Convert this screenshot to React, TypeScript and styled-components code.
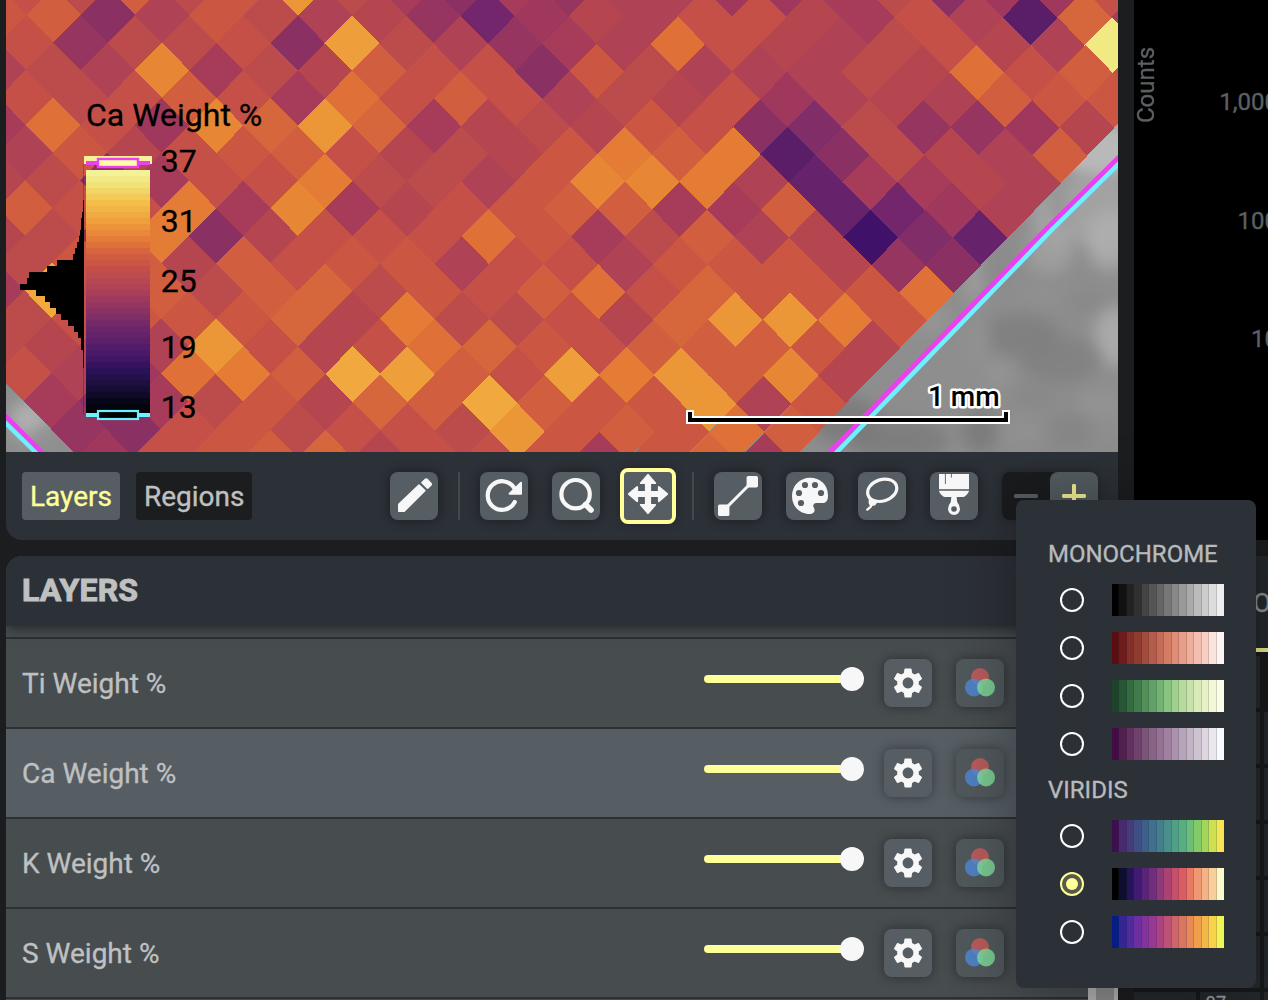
import React from "react";
import styled, { createGlobalStyle } from "styled-components";
import { MdSettings } from "react-icons/md";

const GlobalStyle = createGlobalStyle`
  * { box-sizing: border-box; }
  body { margin: 0; background: #1c1d1f; overflow: hidden; }
`;

const Page = styled.div`
  position: relative;
  display: flex;
  gap: 16px;
  width: 1268px;
  height: 1000px;
  padding-left: 6px;
  overflow: hidden;
  background: #1c1d1f;
  color: #bfc0c1;
  font-family: Roboto, "Liberation Sans", sans-serif;
  -webkit-text-stroke: 0.35px currentColor;
`;

const LeftColumn = styled.div`
  flex: 0 0 1112px;
  display: flex;
  flex-direction: column;
  gap: 16px;
`;

const ViewPanel = styled.section`
  display: flex;
  flex-direction: column;
  flex: none;
  height: 540px;
  border-radius: 0 0 16px 16px;
  background: #2c3037;
  overflow: hidden;
`;

const MapCanvas = styled.svg`
  display: block;
  flex: none;
  width: 1112px;
  height: 452px;
  font-family: Roboto, "Liberation Sans", sans-serif;
  -webkit-text-stroke: 0;
`;

const Toolbar = styled.div`
  display: flex;
  justify-content: space-between;
  flex: none;
  padding: 20px 20px 20px 16px;
  height: 88px;
`;

const TabGroup = styled.div`
  display: flex;
  gap: 16px;
`;

const Tab = styled.button<{ $active?: boolean }>`
  height: 48px;
  padding: 1px 8px 0;
  border: 0;
  border-radius: 4px;
  background: ${(p) => (p.$active ? "#565e64" : "#1c1d1f")};
  color: ${(p) => (p.$active ? "#ffff99" : "#bfc0c1")};
  font: 400 28px/47px Roboto, "Liberation Sans", sans-serif;
  -webkit-text-stroke: 0.35px currentColor;
`;

const Tools = styled.div`
  display: flex;
  gap: 24px;
`;

const ToolSet = styled.div`
  display: flex;
  gap: 24px;
`;

const Divider = styled.div`
  width: 2px;
  height: 48px;
  margin: 0 -4px;
  background: #44484c;
`;

const IconButton = styled.button<{ $selected?: boolean }>`
  display: flex;
  align-items: center;
  justify-content: center;
  width: 48px;
  height: 48px;
  flex: none;
  padding: 0;
  border: 0;
  border-radius: ${(p) => (p.$selected ? 4 : 8)}px;
  outline: ${(p) => (p.$selected ? "4px solid #ffff99" : "none")};
  background: #565e64;
  color: #f7f7f7;
  box-shadow: 0 0 12px rgba(0, 0, 0, ${(p) => (p.$selected ? 0.65 : 0.4)});
`;

const RowButton = styled(IconButton)<{ $dim?: boolean }>`
  background: ${(p) => (p.$dim ? "#50585c" : "#565e64")};
`;

const Toggle = styled.div`
  display: flex;
  width: 96px;
  height: 48px;
  border-radius: 8px;
  background: #1a1b1d;
  box-shadow: 0 0 10px rgba(0, 0, 0, 0.3);
`;

const ToggleHalf = styled.div<{ $on?: boolean }>`
  display: flex;
  align-items: center;
  justify-content: center;
  width: 48px;
  border-radius: 8px;
  background: ${(p) => (p.$on ? "#535b60" : "transparent")};
  color: ${(p) => (p.$on ? "#f0f094" : "#565e64")};
`;

const LayersPanel = styled.section`
  display: flex;
  flex-direction: column;
  flex: none;
  height: 460px;
  border-radius: 16px 16px 0 0;
  background: #474c4f;
  overflow: hidden;
`;

const LayersHeader = styled.h2`
  flex: none;
  height: 70px;
  margin: 0;
  padding-left: 16px;
  background: #2c3037;
  box-shadow: 0 2px 12px rgba(0, 0, 0, 0.5);
  font-size: 32px;
  font-weight: 700;
  line-height: 69px;
  letter-spacing: 0.2px;
  -webkit-text-stroke: 1px currentColor;
  z-index: 1;
`;

const LayerGap = styled.div`
  flex: none;
  height: 13px;
  border-bottom: 2px solid #2c3134;
`;

const LayerRow = styled.div<{ $selected?: boolean }>`
  display: flex;
  align-items: center;
  flex: none;
  height: 90px;
  padding: 0 114px 0 16px;
  border-bottom: 2px solid #2c3134;
  background: ${(p) => (p.$selected ? "#565e64" : "#474c4f")};
  font-size: 28px;
`;

const LayerName = styled.span`
  flex: 1;
`;

const SliderTrack = styled.div`
  display: flex;
  align-items: center;
  justify-content: flex-end;
  width: 160px;
  height: 24px;
  margin: 0 20px 8px 0;
`;

const SliderFill = styled.div`
  flex: 1;
  height: 8px;
  margin-right: -4px;
  border-radius: 4px;
  background: #ffff99;
`;

const SliderThumb = styled.div`
  width: 24px;
  height: 24px;
  border-radius: 50%;
  background: #f7f7f7;
`;

const RowActions = styled.div`
  display: flex;
  gap: 24px;
`;

const RightColumn = styled.div`
  flex: 1;
  min-width: 0;
  display: flex;
  flex-direction: column;
  gap: 16px;
  overflow: hidden;
`;

const ChartPanel = styled.section`
  display: flex;
  height: 540px;
  flex: none;
  background: #000;
  color: #5b6063;
`;

const AxisTitle = styled.div`
  writing-mode: vertical-rl;
  transform: rotate(180deg);
  flex: none;
  width: 22px;
  height: 76px;
  margin-top: 47px;
  font-size: 24px;
  line-height: 24px;
`;

const Ticks = styled.div`
  display: flex;
  flex-direction: column;
  flex: none;
  width: 122px;
  padding-top: 43px;
`;

const Tick = styled.div`
  flex: none;
  height: 118.5px;
  font-size: 24px;
  line-height: 118px;
  text-align: right;
`;

const TablePanel = styled.section`
  display: flex;
  flex-direction: column;
  height: 444px;
  background: #24292d;
`;

const TableTab = styled.div`
  height: 96px;
  padding-left: 119px;
  border-bottom: 4px solid #e7e78c;
  font-size: 26px;
  line-height: 94px;
  color: #8c8f91;
`;

const TableGrid = styled.div`
  flex: 1;
  display: grid;
  grid-template-columns: 62px 60px 10px;
  grid-template-rows: 52px;
  grid-auto-rows: 52px;
  gap: 4px;
  padding-top: 4px;
  background: #17191a;
`;

const Cell = styled.div<{ $blank?: boolean }>`
  padding: 0 34px 0 0;
  background: ${(p) => (p.$blank ? "#17191a" : "#24292d")};
  color: #9b9d9e;
  font-size: 18px;
  line-height: 22px;
  text-align: right;
`;

const ScrollBar = styled.div`
  position: absolute;
  left: 1088px;
  top: 626px;
  width: 30px;
  height: 374px;
  border: solid #b3b3b3;
  border-width: 0 4px 0 8px;
  background: #8c8c8c;
`;

const Popup = styled.aside`
  position: absolute;
  z-index: 5;
  left: 1016px;
  top: 500px;
  width: 240px;
  height: 488px;
  padding: 32px;
  border-radius: 8px;
  background: #2c3037;
  box-shadow: 0 6px 64px rgba(0, 0, 0, 0.34);
`;

const PaletteTitle = styled.h3`
  height: 44px;
  margin: 0;
  color: #b9babc;
  font-size: 24px;
  font-weight: 400;
  line-height: 44px;
`;

const PaletteRow = styled.div`
  display: flex;
  align-items: center;
  justify-content: space-between;
  height: 48px;
  padding-left: 12px;
`;

const Radio = styled.div<{ $checked?: boolean }>`
  display: flex;
  align-items: center;
  justify-content: center;
  width: 24px;
  height: 24px;
  border: 2px solid ${(p) => (p.$checked ? "#ffff99" : "#fff")};
  border-radius: 50%;
  background: ${(p) => (p.$checked ? "#575a48" : "transparent")};
`;

const RadioDot = styled.div`
  width: 12px;
  height: 12px;
  border-radius: 50%;
  background: #ffff99;
`;

const Swatches = styled.div`
  display: flex;
  width: 112px;
  height: 32px;
`;

const Swatch = styled.div<{ $color: string }>`
  flex: 1;
  background: ${(p) => p.$color};
  box-shadow: inset -1px 0 0 rgba(44, 48, 55, 0.18);
  &:last-child { box-shadow: none; }
`;

/* Each character is a weight level; a dot is a place with no measurement. */
const ROWS = [
  "CBEBDJB858699778B577C",
  "DE59DB9A637A9CCA8C91F8",
  "C6BBC5KB9689GCA9BCA9M",
  "9B9I8BAECC5DB999BAGCEC",
  "CBCEC8GCEC9BAC79A9EDD",
  "8GC7IFJF8ABADC54B667A.",
  "9DACDECABADHEH15BA9E.",
  "AB58CCHBB9DIIH9288A9..",
  "ECCH8I8ACDEE88E2379..",
  "AB5H5ACCCGD8BE9A042...",
  "BDEAECDD9CC9DDDA65...",
  "8LCEBEFBDCEGCFDDDG....",
  "BCDDDFAHBBCAFJJHD....",
  "BAA9JCACGFDCEEEDA.....",
  "C97GHELKECKHJEIA.....",
  ".858BDAFELEDDJ9D......",
  ".65CDBCCBJDEDGE......",
  "..7CDEFACCD8DF8.......",
];

const LEVELS = "0123456789ABCDEFGHIJKLM";
const LEVEL_COLORS = [
  "#3f1168", "#5a1e69", "#66236b", "#73266b", "#812d68", "#8b3063", "#953560", "#9f385c",
  "#a63c59", "#af4254", "#b54650", "#bc4b4c", "#c45048", "#cb5743", "#d05e3f", "#d6663c",
  "#df7037", "#e47c36", "#e78735", "#ec9737", "#ee9f3b", "#f0a83f", "#f1ea82",
];

const RAMP: [number, number[]][] = [
  [170, [244, 243, 154]], [182, [239, 228, 120]], [200, [243, 192, 75]], [218, [238, 162, 61]],
  [236, [230, 126, 54]], [250, [214, 99, 62]], [266, [197, 80, 72]], [284, [178, 68, 84]],
  [300, [154, 56, 96]], [320, [118, 42, 104]], [340, [90, 31, 105]], [356, [66, 22, 102]],
  [372, [38, 17, 82]], [384, [26, 14, 58]], [396, [10, 8, 32]], [412, [0, 0, 0]],
];

function rampColor(y: number) {
  const n = Math.max(1, RAMP.findIndex(([stop]) => stop >= y));
  const [y0, a] = RAMP[n - 1];
  const [y1, b] = RAMP[n];
  const t = (y - y0) / (y1 - y0);
  return `rgb(${a.map((v, k) => Math.round(v + (b[k] - v) * t)).join(",")})`;
}

const HISTOGRAM = [
  1, 1, 2, 3, 3, 4, 5, 7, 9, 11, 27, 37, 55, 57, 64, 48, 39, 34, 28, 23, 16, 10, 6, 3, 3, 1, 1, 1,
];

/* cx, cy, rx, ry, grey level, opacity */
const CLOUDS = [
  [1100, 150, 40, 30, 190, 0.9], [1090, 215, 60, 40, 168, 0.8], [1058, 200, 8, 22, 142, 0.7],
  [1110, 240, 24, 30, 178, 0.7], [1075, 255, 12, 14, 138, 0.8], [1050, 252, 24, 22, 168, 0.6],
  [1114, 336, 20, 30, 176, 0.8], [1020, 335, 40, 22, 124, 0.7], [978, 340, 12, 24, 148, 0.7],
  [930, 320, 20, 16, 150, 0.8], [1000, 375, 16, 14, 150, 0.7], [1060, 360, 40, 24, 126, 0.7],
  [1100, 405, 24, 14, 150, 0.6], [980, 432, 18, 22, 116, 0.7], [1024, 432, 22, 14, 146, 0.7],
  [930, 390, 14, 16, 142, 0.6], [900, 440, 50, 22, 122, 0.8], [1070, 430, 24, 16, 130, 0.7],
  [974, 280, 10, 24, 162, 0.7], [1000, 270, 12, 20, 136, 0.6], [1050, 295, 30, 12, 146, 0.6],
  [845, 420, 36, 24, 118, 0.7], [30, 420, 20, 20, 180, 0.9], [46, 440, 18, 14, 145, 0.8],
  [1085, 300, 22, 12, 132, 0.5], [1035, 395, 24, 14, 132, 0.5],
];

function WeightMap() {
  return (
    <MapCanvas viewBox="6 0 1112 452">
      <defs>
        <filter id="soft" x="-100%" y="-100%" width="300%" height="300%">
          <feGaussianBlur stdDeviation="8" />
        </filter>
      </defs>
      <rect x="6" width="1112" height="452" fill="#8e8e8e" />
      {CLOUDS.map(([cx, cy, rx, ry, g, o], k) => (
        <ellipse key={k} cx={cx} cy={cy} rx={rx} ry={ry} fill={`rgb(${g},${g},${g})`} opacity={o} filter="url(#soft)" />
      ))}
      {ROWS.map((row, r) => {
        const first = r % 2 === 0 ? -12 : -13;
        const j = r - 2;
        return [...row].map((ch, c) => {
          if (ch === ".") return null;
          const x = 352 + 0.05 * j + (27.14 + 0.02 * j) * (first + 2 * c);
          const y = 42.8 + 27.55 * j + x * (0.0026 + 0.0013 * Math.max(0, j - 12));
          const color = LEVEL_COLORS[LEVELS.indexOf(ch)];
          return (
            <path
              key={`${r}-${c}`}
              d={`M${x - 27.8} ${y}L${x} ${y - 28}L${x + 27.8} ${y}L${x} ${y + 28}Z`}
              fill={color}
              shapeRendering="crispEdges"
            />
          );
        });
      })}
      <g fill="none" strokeWidth="4.6">
        <path d="M1124 158.5L1056 225.5L835 454" stroke="#6df0ff" />
        <path d="M1124 152L1050 225L828 454" stroke="#ec40f0" />
        <path d="M0 417.5L41 457.5" stroke="#6df0ff" />
        <path d="M0 410.5L47 457.5" stroke="#ec40f0" />
      </g>

      <g fontSize="32" stroke="#000" strokeWidth=".3">
        <text x="86" y="126">Ca Weight %</text>
      </g>
      {HISTOGRAM.map((w, k) => (
        <rect key={k} x={84 - w} y={200 + 6 * k} width={w} height="6" shapeRendering="crispEdges" />
      ))}
      <path d="M83.5 164V200M83.5 368V415" stroke="#000" strokeOpacity=".2" />
      <rect x="84" y="156" width="68" height="8" fill="#f7f29a" />
      {Array.from({ length: 41 }, (_, k) => (
        <rect key={k} x="86" y={170 + 6 * k} width="64" height={k === 40 ? 5 : 6} fill={rampColor(Math.min(412, 171 + 6 * k))} shapeRendering="crispEdges" />
      ))}
      <rect x="86" y="161" width="64" height="4" fill="#ec40f0" />
      <rect x="98" y="159" width="40" height="8" fill="#fdfda8" stroke="#ec40f0" strokeWidth="2.4" />
      <rect x="86" y="413" width="64" height="4" fill="#6df0ff" />
      <rect x="98" y="411" width="40" height="8" fill="#000" stroke="#6df0ff" strokeWidth="2.2" />
      <g fontSize="32" stroke="#000" strokeWidth=".3">
        <text x="160.7" y="172">37</text>
        <text x="160.7" y="232">31</text>
        <text x="160.7" y="292">25</text>
        <text x="160.7" y="358">19</text>
        <text x="160.7" y="418">13</text>
      </g>

      <g fill="none">
        <path d="M690 410V420H1006V410" stroke="#fff" strokeWidth="8" />
        <path d="M690 412V420H1006V412" stroke="#000" strokeWidth="4" />
      </g>
      <text x="928" y="406" fontSize="28" fontWeight="500" stroke="#fff" strokeWidth="5" strokeLinejoin="round" paintOrder="stroke">1 mm</text>
    </MapCanvas>
  );
}

const Glyph = styled.svg.attrs({ viewBox: "0 0 48 48" })`
  display: block;
  width: 48px;
  height: 48px;
  fill: currentColor;
`;

const PencilIcon = () => (
  <Glyph stroke="currentColor" strokeWidth="1.6" strokeLinejoin="round">
    <path d="M8.8 39.2V32.4L29 13L34.8 18.6L14.2 39.2Z" />
    <path d="M32 10.6L35.7 7.2Q36.3 6.8 37 7.4L41 11.5Q41.5 12.3 41 13L37.6 16.2Z" />
  </Glyph>
);

const RotateIcon = () => (
  <Glyph>
    <path d="M34.8 30A14.3 14.3 0 1 1 34.5 16.5" fill="none" stroke="currentColor" strokeWidth="4.2" strokeLinecap="round" />
    <path d="M41 10.8V21.8H29.6Z" stroke="currentColor" strokeWidth="2" strokeLinejoin="round" />
  </Glyph>
);

const ZoomIcon = () => (
  <Glyph>
    <circle cx="23.6" cy="22.2" r="14.2" fill="none" stroke="currentColor" strokeWidth="4.2" />
    <path d="M33.5 32.5L39 38" stroke="currentColor" strokeWidth="5.6" strokeLinecap="round" />
  </Glyph>
);

const MoveIcon = () => (
  <Glyph>
    <path
      d="M24 2.8L31.2 11.2H26.2V19.8H34.8V15L43.2 22L34.8 29.2V24.2H26.2V32.8H31.2L24 41.2L16.8 32.8H21.8V24.2H13.2V29.2L4.8 22L13.2 15V19.8H21.8V11.2H16.8Z"
      stroke="currentColor"
      strokeWidth="1.8"
      strokeLinejoin="round"
    />
  </Glyph>
);

const LineIcon = () => (
  <Glyph>
    <path d="M10 38L38 10" stroke="currentColor" strokeWidth="3" />
    <rect x="32.6" y="4" width="11.4" height="11.4" rx="1.6" />
    <rect x="4" y="32.6" width="11.4" height="11.4" rx="1.6" />
  </Glyph>
);

const PaletteIcon = () => (
  <Glyph>
    <path d="M24 5.8C34 5.8 42 12.6 42 23.4C42 28.6 40 31 36.4 31L30.4 31C27.6 31 26.6 33.6 27.8 35.6C29.6 38.8 28.4 42 23.6 42C13.6 42 6 34.2 6 24C6 13.6 14 5.8 24 5.8Z" />
    <g fill="#565e64">
      <circle cx="19" cy="13" r="3.1" />
      <circle cx="29" cy="13" r="3.1" />
      <circle cx="35" cy="21" r="3.1" />
      <circle cx="13" cy="21" r="3.1" />
      <circle cx="15" cy="31" r="3.1" />
    </g>
  </Glyph>
);

const LassoIcon = () => (
  <Glyph>
    <ellipse cx="24.2" cy="18.3" rx="14.9" ry="10.7" transform="rotate(-18 24.2 18.3)" fill="none" stroke="currentColor" strokeWidth="3.2" />
    <path d="M10.8 25.5L14.5 27.5L20 29.5L17 33.5L12 34L10.6 31Z" />
    <path d="M14 31.5L12.6 34.8L9.3 37.6" fill="none" stroke="currentColor" strokeWidth="2.4" strokeLinecap="round" />
  </Glyph>
);

const BrushIcon = () => (
  <Glyph>
    <rect x="9" y="2" width="30" height="15.2" />
    <path d="M15.4 2V12M21.4 2V5.6" stroke="#565e64" strokeWidth=".9" />
    <path d="M9 18.8H39C38.4 21.8 35.4 24.4 33.4 25H14.6C12.6 24.4 9.6 21.8 9 18.8Z" />
    <path fillRule="evenodd" d="M21.4 24.5H26.6L27.2 30Q30 33.4 30 37A6 6 0 0 1 18 37Q18 33.4 20.8 30ZM24 34.2A2.8 2.8 0 1 0 24 39.8A2.8 2.8 0 1 0 24 34.2Z" />
  </Glyph>
);

const RgbIcon = () => (
  <Glyph>
    <circle cx="24" cy="18" r="9" fill="#d05b5a" opacity=".8" />
    <circle cx="18" cy="28.4" r="9" fill="#4d8be0" opacity=".76" />
    <circle cx="30" cy="28.4" r="9" fill="#80dd9a" opacity=".82" />
  </Glyph>
);

const MinusIcon = () => (
  <Glyph><rect x="12" y="22" width="24" height="4" rx="1.6" /></Glyph>
);

const PlusIcon = () => (
  <Glyph>
    <rect x="12" y="22" width="24" height="4" rx="1.4" />
    <rect x="22" y="12" width="4" height="24" rx="1.4" />
  </Glyph>
);

const LAYERS = ["Ti Weight %", "Ca Weight %", "K Weight %", "S Weight %"];

const colors = (list: string) => list.split(" ").map((c) => `#${c}`);

const PALETTES = [
  {
    title: "MONOCHROME",
    ramps: [
      colors("000000 111111 222222 303030 444444 555555 666666 777777 888888 999999 aaaaaa bbbbbb cccccc dddddd eeeeee"),
      colors("5c0d12 6f1d1c 833028 8f3c30 a44c3c b55b4a c46c57 d57c65 e08d77 e79d88 efad9b f4bfb0 f8d0c2 fae4db fbf5f3"),
      colors("1d432b 275637 336a40 427b4b 529057 62a165 74b274 88c380 a0d08d b5da9c c8e3a9 d8ebb8 e6f1c6 f2f7d8 fbfde8"),
      colors("440c44 52204f 613260 6e426d 7c5379 886385 957194 a081a0 ac92ac b8a4ba c3b4c5 cec4d1 dfd6e1 eae7ee f7fbff"),
    ],
  },
  {
    title: "VIRIDIS",
    ramps: [
      colors("3c0f50 472a6f 443c7b 3f4f84 3c6089 3f708c 447f8c 4a8f8b 4fa087 57af80 6cbd75 83ca69 a4d55b cfdf4f f8e453"),
      colors("000000 0f0e30 261458 411b71 5b247a 722e7c 8f397a aa4374 c64f6a db5d61 e97a62 f09872 f4b384 f6cf9b fafbcc"),
      colors("061d87 352592 4f2b9d 6b2fa1 82339c 993891 ac4381 bc5376 cd6569 da7560 e78a54 ef9f4c f4b74a f6d348 eef653"),
    ],
  },
];

export default function App() {
  return (
    <Page>
      <GlobalStyle />
      <LeftColumn>
        <ViewPanel>
          <WeightMap />
          <Toolbar>
            <TabGroup>
              <Tab $active>Layers</Tab>
              <Tab>Regions</Tab>
            </TabGroup>
            <Tools>
              <IconButton><PencilIcon /></IconButton>
              <Divider />
              <ToolSet>
                <IconButton><RotateIcon /></IconButton>
                <IconButton><ZoomIcon /></IconButton>
                <IconButton $selected><MoveIcon /></IconButton>
              </ToolSet>
              <Divider />
              <ToolSet>
                <IconButton><LineIcon /></IconButton>
                <IconButton><PaletteIcon /></IconButton>
                <IconButton><LassoIcon /></IconButton>
                <IconButton><BrushIcon /></IconButton>
              </ToolSet>
              <Toggle>
                <ToggleHalf><MinusIcon /></ToggleHalf>
                <ToggleHalf $on><PlusIcon /></ToggleHalf>
              </Toggle>
            </Tools>
          </Toolbar>
        </ViewPanel>
        <LayersPanel>
          <LayersHeader>LAYERS</LayersHeader>
          <LayerGap />
          {LAYERS.map((name) => (
            <LayerRow key={name} $selected={name === "Ca Weight %"}>
              <LayerName>{name}</LayerName>
              <SliderTrack>
                <SliderFill />
                <SliderThumb />
              </SliderTrack>
              <RowActions>
                <RowButton><MdSettings size={36} /></RowButton>
                <RowButton $dim><RgbIcon /></RowButton>
              </RowActions>
            </LayerRow>
          ))}
        </LayersPanel>
      </LeftColumn>
      <RightColumn>
        <ChartPanel>
          <AxisTitle>Counts</AxisTitle>
          <Ticks>
            <Tick>1,000</Tick>
            <Tick>100</Tick>
            <Tick>10</Tick>
          </Ticks>
        </ChartPanel>
        <TablePanel>
          <TableTab>O</TableTab>
          <TableGrid>
            {Array.from({ length: 21 }, (_, k) => (
              <Cell key={k} $blank={k === 2}>{k === 19 ? "97" : ""}</Cell>
            ))}
          </TableGrid>
        </TablePanel>
      </RightColumn>
      <ScrollBar />
      <Popup>
        {PALETTES.map(({ title, ramps }) => (
          <React.Fragment key={title}>
            <PaletteTitle>{title}</PaletteTitle>
            {ramps.map((ramp, k) => {
              const checked = title === "VIRIDIS" && k === 1;
              return (
                <PaletteRow key={k}>
                  <Radio $checked={checked}>{checked && <RadioDot />}</Radio>
                  <Swatches>
                    {ramp.map((c, n) => <Swatch key={n} $color={c} />)}
                  </Swatches>
                </PaletteRow>
              );
            })}
          </React.Fragment>
        ))}
      </Popup>
    </Page>
  );
}
